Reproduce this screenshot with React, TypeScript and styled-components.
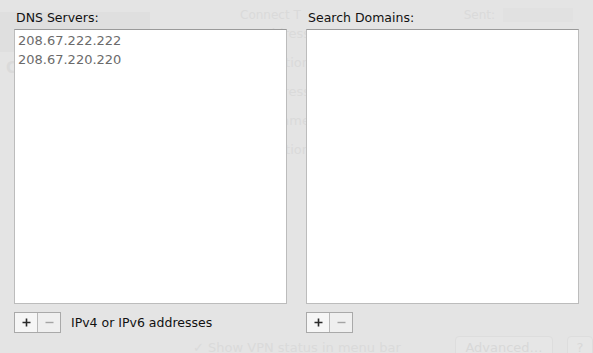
import React from 'react';
import styled, { createGlobalStyle } from 'styled-components';

const GlobalStyle = createGlobalStyle`
  html, body {
    margin: 0;
    padding: 0;
    background: #e4e4e4;
  }
  body {
    font-family: 'DejaVu Sans', 'Liberation Sans', sans-serif;
    -webkit-font-smoothing: antialiased;
  }
`;

interface ListColumnProps {
  title: string;
  items: string[];
  hint?: string;
}

function ListColumn({ title, items, hint }: ListColumnProps) {
  return (
    <Column>
      <ColumnLabel>{title}</ColumnLabel>
      <ListBox>
        {items.map((item) => (
          <ListItem key={item}>{item}</ListItem>
        ))}
      </ListBox>
      <ControlRow>
        <Segmented>
          <SegButton $enabled>
            <svg width="9" height="9" viewBox="0 0 9 9">
              <path d="M4.5 0.5v8M0.5 4.5h8" stroke="#2a2a2a" strokeWidth="1.6" />
            </svg>
          </SegButton>
          <SegButton>
            <svg width="9" height="9" viewBox="0 0 9 9">
              <path d="M0.5 4.5h8" stroke="#a4a4a4" strokeWidth="1.4" />
            </svg>
          </SegButton>
        </Segmented>
        {hint && <Hint>{hint}</Hint>}
      </ControlRow>
    </Column>
  );
}

function App() {
  return (
    <>
      <GlobalStyle />
      <Page>
        <Backdrop>
          <Sidebar>
            <SidebarBand />
            <SidebarEntry>
              <GhostText $size={15} $weight={700}>C</GhostText>
            </SidebarEntry>
          </Sidebar>
          <GhostColumn>
            <GhostRow>
              <GhostText $size={12}>Connect T</GhostText>
              <GhostSpacer />
              <GhostText $size={12}>Sent:</GhostText>
              <GhostField />
            </GhostRow>
            <GhostStack>
              <GhostText>Address</GhostText>
              <GhostText>Station</GhostText>
              <GhostText>Address</GhostText>
              <GhostText>Name</GhostText>
              <GhostText>Station</GhostText>
            </GhostStack>
            <GhostFooter>
              <GhostText>✓ Show VPN status in menu bar</GhostText>
              <GhostSpacer />
              <GhostButton>Advanced…</GhostButton>
              <GhostButton $narrow>?</GhostButton>
            </GhostFooter>
          </GhostColumn>
        </Backdrop>
        <Sheet>
          <ListColumn
            title="DNS Servers:"
            items={['208.67.222.222', '208.67.220.220']}
            hint="IPv4 or IPv6 addresses"
          />
          <ListColumn title="Search Domains:" items={[]} />
        </Sheet>
      </Page>
    </>
  );
}
export default App;

const Page = styled.div`
  position: relative;
  width: 593px;
  height: 353px;
  overflow: hidden;
  background: #e4e4e4;
`;

const Backdrop = styled.div`
  display: flex;
  height: 100%;
`;

const Sidebar = styled.div`
  flex-shrink: 0;
  display: flex;
  flex-direction: column;
  width: 150px;
  padding-top: 12px;
  box-sizing: border-box;
`;

const SidebarBand = styled.div`
  height: 40px;
  background: #dfdfdf;
`;

const SidebarEntry = styled.div`
  padding: 6px 6px 0;
`;

const GhostColumn = styled.div`
  flex: 1;
  min-width: 0;
  display: flex;
  flex-direction: column;
  padding: 8px 0 0 40px;
`;

const GhostRow = styled.div`
  display: flex;
  align-items: center;
  gap: 8px;
  padding: 0 20px 0 50px;
`;

const GhostSpacer = styled.div`
  flex: 1;
`;

const GhostField = styled.div`
  width: 70px;
  height: 14px;
  background: #e1e1e1;
`;

const GhostStack = styled.div`
  display: flex;
  flex-direction: column;
  align-items: flex-end;
  gap: 14px;
  width: 120px;
  padding: 4px 0 0 0;
`;

const GhostFooter = styled.div`
  display: flex;
  align-items: center;
  gap: 14px;
  margin-top: auto;
  padding: 0 0 0 3px;
  height: 24px;
  margin-bottom: -6px;
`;

const GhostText = styled.span<{ $size?: number; $weight?: number }>`
  font-size: ${({ $size }) => $size ?? 13}px;
  font-weight: ${({ $weight }) => $weight ?? 400};
  color: #dadada;
  white-space: nowrap;
`;

const GhostButton = styled.div<{ $narrow?: boolean }>`
  display: flex;
  align-items: center;
  justify-content: center;
  width: ${({ $narrow }) => ($narrow ? 24 : 96)}px;
  height: 20px;
  border: 1px solid #dddddd;
  border-radius: 4px;
  background: #e6e6e6;
  font-size: 13px;
  color: #d8d8d8;
`;

const Sheet = styled.div`
  position: absolute;
  inset: 0;
  display: grid;
  grid-template-columns: 273px 273px;
  column-gap: 19px;
  padding: 10px 0 0 14px;
  box-sizing: border-box;
`;

const Column = styled.div`
  display: flex;
  flex-direction: column;
`;

const ColumnLabel = styled.div`
  height: 16px;
  line-height: 16px;
  margin: 0 0 3px 2px;
  font-size: 12.5px;
  color: #111;
`;

const ListBox = styled.div`
  display: flex;
  flex-direction: column;
  height: 275px;
  padding: 1px 0 0 3px;
  box-sizing: border-box;
  background: #fff;
  border: 1px solid #bcbcbc;
  border-top-color: #9a9a9a;
`;

const ListItem = styled.div`
  height: 19px;
  line-height: 19px;
  font-size: 13px;
  color: #6b6b6b;
`;

const ControlRow = styled.div`
  display: flex;
  align-items: center;
  gap: 10px;
  margin-top: 8px;
`;

const Segmented = styled.div`
  display: flex;
  height: 21px;
  border: 1px solid #a9a9a9;
  box-sizing: border-box;
  background: #f1f1f1;
`;

const SegButton = styled.div<{ $enabled?: boolean }>`
  display: flex;
  align-items: center;
  justify-content: center;
  width: 22px;
  background: ${({ $enabled }) => ($enabled ? '#f6f6f6' : '#efefef')};

  & + & {
    border-left: 1px solid #b8b8b8;
  }
`;

const Hint = styled.span`
  font-size: 12.5px;
  color: #111;
`;
